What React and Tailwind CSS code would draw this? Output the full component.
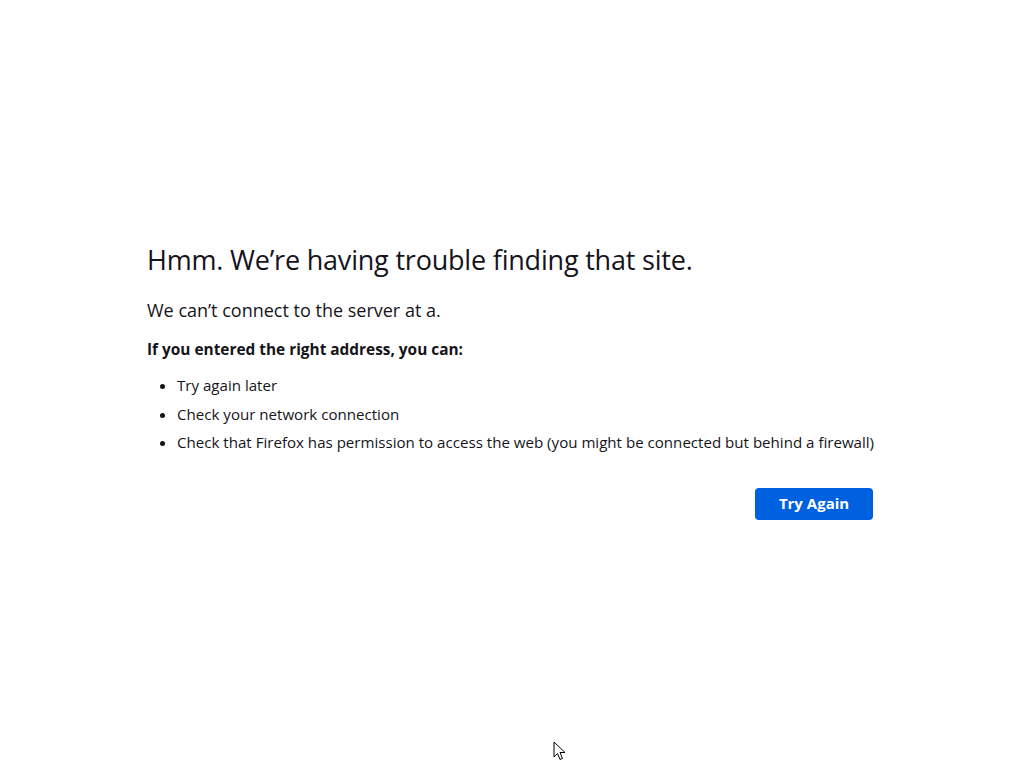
export default function App() {
  const font = { fontFamily: '"Open Sans", "DejaVu Sans", sans-serif' };
  return (
    <div className="relative min-h-screen w-full bg-white text-[#15141a]" style={font}>
      <div className="mx-auto w-[730px] pt-[242px]">
        <h1 className="text-[27px] leading-[36px] font-normal tracking-[-0.2px]">Hmm. We’re having trouble finding that site.</h1>
        <p className="mt-[20px] text-[18px] leading-[24px]">We can’t connect to the server at a.</p>
        <p className="mt-[18px] text-[15.4px] leading-[20px] font-bold">If you entered the right address, you can:</p>
        <ul className="mt-[11px] list-disc pl-[30px] text-[15.1px] leading-[28.5px] whitespace-nowrap">
          <li>Try again later</li>
          <li>Check your network connection</li>
          <li>Check that Firefox has permission to access the web (you might be connected but behind a firewall)</li>
        </ul>
        <div className="mt-[31px] flex justify-end pr-1">
          <button className="h-[32px] w-[118px] rounded-[4px] bg-[#0061e0] text-[15px] font-bold text-white">Try Again</button>
        </div>
      </div>
      <svg className="absolute left-[553px] top-[741px]" width="13" height="20" viewBox="0 0 13 20">
        <path d="M1 1 L1 16 L4.5 12.5 L7 18.5 L9.5 17.5 L7 11.5 L12 11.5 Z" fill="white" stroke="black" strokeWidth="1" strokeLinejoin="round" />
      </svg>
    </div>
  );
}
